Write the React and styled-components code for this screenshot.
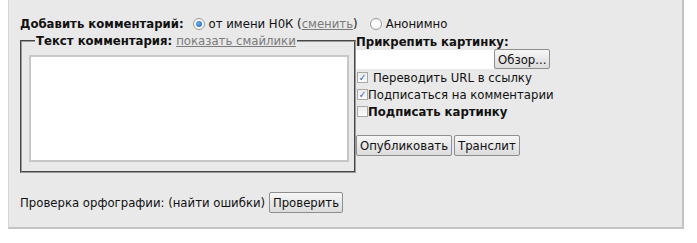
import React from "react";
import styled, { createGlobalStyle } from "styled-components";

const FONT = `"DejaVu Sans Condensed", "DejaVu Sans", Verdana, sans-serif`;

const GlobalStyle = createGlobalStyle`
  body {
    margin: 0;
    background: #ffffff;
    font-family: ${FONT};
    font-size: 13px;
    color: #111;
  }
`;

const Panel = styled.div`
  margin-left: 8px;
  width: 676px;
  height: 229px;
  background: #e9e9e9;
  border-left: 1px solid #d6d6d6;
  border-right: 2px solid #c4c4c4;
  border-bottom: 2px solid #c4c4c4;
  padding: 15px 0 0 11px;
  box-sizing: border-box;
`;

const TopRow = styled.div`
  display: flex;
  align-items: center;
  height: 17px;
  white-space: nowrap;
`;

const Bold = styled.b`
  font-weight: bold;
  margin-right: ${p => p.$gap || 0}px;
`;

const Link = styled.a`
  color: #7a7a7a;
  text-decoration: underline;
`;

const Radio = styled.span`
  display: inline-block;
  width: 10px;
  height: 10px;
  border-radius: 50%;
  border: 1px solid #9a9a9a;
  background: radial-gradient(circle, #fff 0, #f4f4f4 100%);
  margin: 0 4px 0 ${p => p.$left || 0}px;
  position: relative;
  &::after {
    content: "";
    display: ${p => (p.$checked ? "block" : "none")};
    position: absolute;
    left: 2px;
    top: 2px;
    width: 6px;
    height: 6px;
    border-radius: 50%;
    background: radial-gradient(circle at 40% 40%, #6ab0ff, #1356b8);
  }
`;

const Body = styled.div`
  display: flex;
  align-items: flex-start;
  margin-top: 1px;
`;

const Fieldset = styled.fieldset`
  width: 336px;
  height: 140px;
  box-sizing: border-box;
  margin: 0;
  padding: 0 5px 0 7px;
  border: 2px groove #9a9a9a;
`;

const Legend = styled.legend`
  padding: 0 1px 0 1px;
  margin-left: 6px;
  white-space: nowrap;
`;

const TextArea = styled.textarea`
  display: block;
  width: 320px;
  height: 107px;
  box-sizing: border-box;
  margin-top: 7px;
  border: 2px solid #c7c7c7;
  background: #fff;
  resize: none;
`;

const Side = styled.div`
  display: flex;
  flex-direction: column;
  align-items: flex-start;
  padding-top: 1px;
`;

const FileRow = styled.div`
  display: flex;
  align-items: center;
  margin-top: 0;
`;

const FileField = styled.div`
  width: 138px;
  height: 19px;
  background: #fff;
`;

const Button = styled.button`
  font-family: ${FONT};
  font-size: 13px;
  color: #111;
  height: ${p => p.$h || 21}px;
  padding: 0 3px;
  margin: 0 2px 0 0;
  background: linear-gradient(#f6f6f6, #dcdcdc);
  border: 1px solid #8e8e8e;
  border-radius: 2px;
`;

const CheckRow = styled.label`
  display: flex;
  align-items: center;
  height: 17px;
  white-space: nowrap;
`;

const Box = styled.span`
  display: inline-block;
  width: 11px;
  height: 11px;
  box-sizing: border-box;
  border: 1px solid #a8a8a8;
  background: linear-gradient(#ececec, #fafafa);
  margin-right: ${p => p.$gap}px;
  margin-left: 1px;
  color: #2a66c8;
  font-size: 10px;
  line-height: 9px;
  text-align: center;
`;

const Actions = styled.div`
  display: flex;
  margin-top: 15px;
`;

const SpellRow = styled.div`
  display: flex;
  align-items: center;
  margin-top: 19px;
  white-space: nowrap;
`;

const Check = ({ checked, gap, bold, children }) => (
  <CheckRow>
    <Box $gap={gap}>{checked ? "✓" : ""}</Box>
    {bold ? <Bold>{children}</Bold> : children}
  </CheckRow>
);

export default function App() {
  return (
    <>
      <GlobalStyle />
      <Panel>
        <TopRow>
          <Bold $gap={9}>Добавить комментарий:</Bold>
          <Radio $checked />
          от имени Н0К (<Link>сменить</Link>)
          <Radio $left={12} />
          Анонимно
        </TopRow>
        <Body>
          <Fieldset>
            <Legend>
              <Bold $gap={4}>Текст комментария:</Bold>
              <Link>показать смайлики</Link>
            </Legend>
            <TextArea />
          </Fieldset>
          <Side>
            <Bold>Прикрепить картинку:</Bold>
            <FileRow>
              <FileField />
              <Button $h={20}>Обзор...</Button>
            </FileRow>
            <Check checked gap={5}>Переводить URL в ссылку</Check>
            <Check checked gap={0}>Подписаться на комментарии</Check>
            <Check gap={0} bold>Подписать картинку</Check>
            <Actions>
              <Button>Опубликовать</Button>
              <Button>Транслит</Button>
            </Actions>
          </Side>
        </Body>
        <SpellRow>
          Проверка орфографии: (найти ошибки)&nbsp;
          <Button>Проверить</Button>
        </SpellRow>
      </Panel>
    </>
  );
}
